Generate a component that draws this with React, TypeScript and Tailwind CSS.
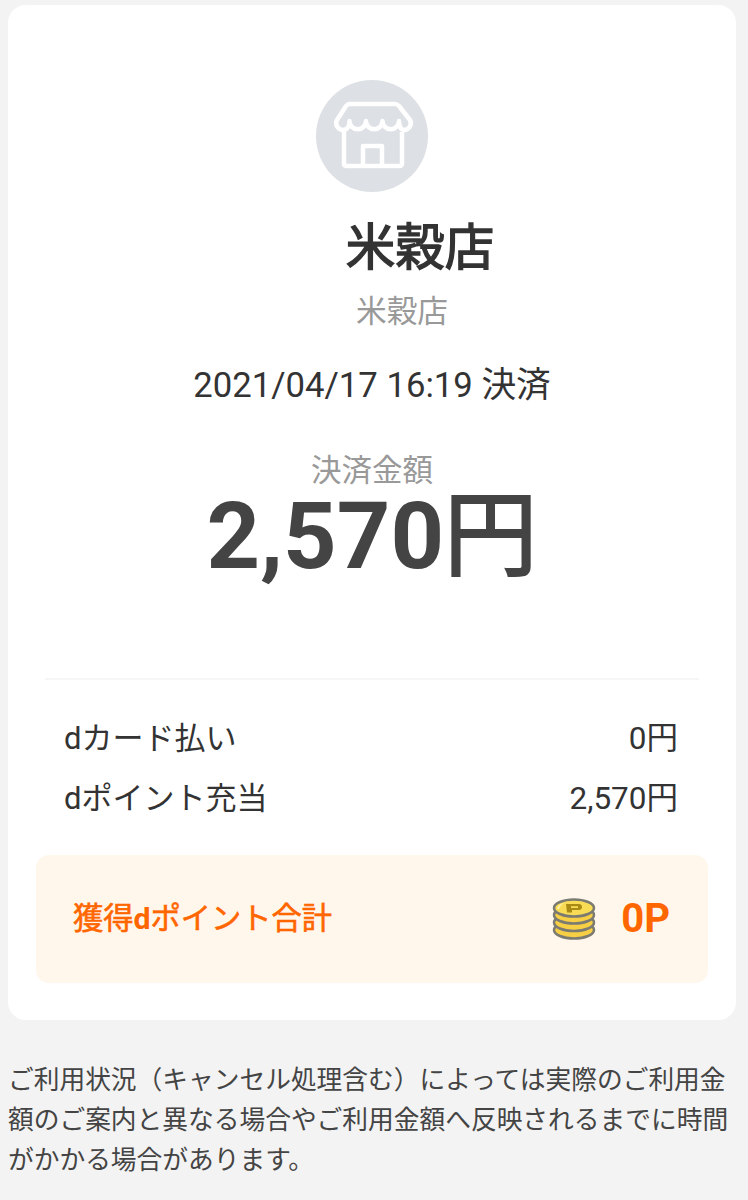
const font = "font-['Roboto','Noto_Sans_CJK_JP',sans-serif]";

function ShopIcon() {
  return (
    <svg viewBox="0 0 112 112" className="w-[112px] h-[112px]">
      <circle cx="56" cy="56" r="56" fill="#dde0e5" />
      <path
        d="M33 24H79C81 24 82 25 83 26L94 40C97 45 92 50 88 50C85 50 83 46 83 41A8.25 8.25 0 0 1 66.5 41A8.25 8.25 0 0 1 50 41A8.25 8.25 0 0 1 33.5 41C33.5 46 31 50 27 50C23 50 18 45 21 40L30 26C31 25 32 24 33 24Z"
        fill="none"
        stroke="#fff"
        strokeWidth="4.5"
        strokeLinejoin="round"
      />
      <path
        d="M28 52V84C28 85 29 86 30 86H84C85 86 86 85 86 84V52M47 86V66H66V86"
        fill="none"
        stroke="#fff"
        strokeWidth="4.5"
        strokeLinejoin="round"
      />
    </svg>
  );
}

function CoinIcon() {
  return (
    <svg viewBox="0 0 44 42" className="w-[44px] h-[42px]">
      <g stroke="#7b7b72" strokeWidth="2.5" fill="#f7cf45">
        <ellipse cx="22" cy="32" rx="20" ry="8.5" />
        <ellipse cx="22" cy="24.5" rx="20" ry="8.5" />
        <ellipse cx="22" cy="17" rx="20" ry="8.5" />
        <ellipse cx="22" cy="10" rx="20" ry="8.5" fill="#f8dc55" />
      </g>
      <path d="M5 11C6 7 10 5 13 4.5C10 6 8 8 7 11Z" fill="#fdf0a8" />
      <path d="M14 6H27C31 6 31 12 27 12H20V14.5H15Z" fill="#a88a14" />
      <path d="M19 8.2H26V10H19Z" fill="#f8dc55" />
    </svg>
  );
}

export default function App() {
  return (
    <div className={`${font} w-[748px] h-[1200px] bg-[#f3f3f3] pl-2 pr-3 pt-[5px] overflow-hidden`}>
      {/* card */}
      <div className="bg-white rounded-[18px] h-[1015px] flex flex-col">
        <div className="flex flex-col items-center pt-[75px]">
          <ShopIcon />
          <div className="mt-[21px] pl-[96px] text-[49.5px] leading-[70px] text-[#333] [-webkit-text-stroke:1.4px_#333]">米穀店</div>
          <div className="mt-[7px] pl-[60px] text-[30.7px] leading-[44px] text-[#999]">米穀店</div>
          <div className="mt-[27px] text-[34.7px] leading-[48px] text-[#333]">2021/04/17 16:19 決済</div>
          <div className="mt-[44px] text-[30.5px] leading-[36px] text-[#999]">決済金額</div>
          <div className="mt-[5px] text-[93.5px] leading-[84px] font-bold text-[#444]">
            2,570<span className="font-normal [-webkit-text-stroke:2px_#444]">円</span>
          </div>
        </div>

        <div className="mx-[37px] mt-[100px] border-t-2 border-[#f6f6f6]" />

        <div className="mt-[29px] pl-[56px] pr-[58px] text-[31px] text-[#333]">
          <div className="flex justify-between leading-[60px]">
            <span>dカード払い</span>
            <span className="text-[31.5px]">0円</span>
          </div>
          <div className="flex justify-between leading-[60px]">
            <span>dポイント充当</span>
            <span className="text-[31.5px]">2,570円</span>
          </div>
        </div>

        <div className="mx-7 mt-[26px] h-[128px] rounded-[13px] bg-[#fff7ec] flex items-center justify-between pl-[37px] pr-[38px] text-[#ff6600]">
          <span className="text-[30.25px] [-webkit-text-stroke:0.6px_#ff6600]">
            獲得<span className="font-bold [-webkit-text-stroke:0]">d</span>ポイント合計
          </span>
          <div className="flex items-center gap-[25px]">
            <CoinIcon />
            <span className="text-[40px] font-bold">0P</span>
          </div>
        </div>
      </div>

      <p className="mt-[40px] text-[25.72px] leading-[40px] text-[#444]">
        ご利用状況（キャンセル処理含む）によっては実際のご利用金額のご案内と異なる場合やご利用金額へ反映されるまでに時間がかかる場合があります。
      </p>
    </div>
  );
}
